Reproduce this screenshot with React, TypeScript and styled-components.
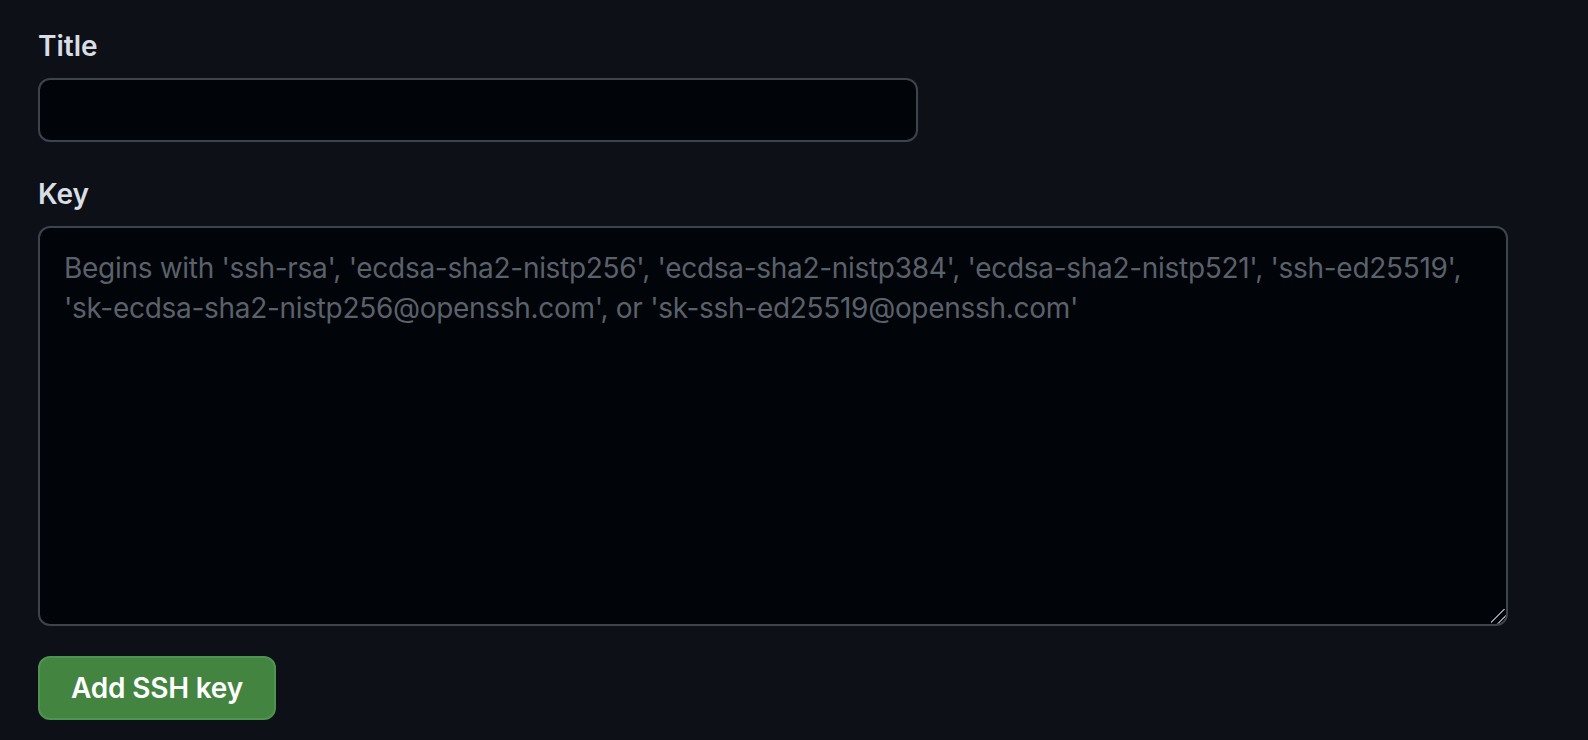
import React from "react";
import styled, { createGlobalStyle } from "styled-components";

const Global = createGlobalStyle`
  html, body {
    margin: 0;
    padding: 0;
    background: #0d1117;
  }
  body {
    font-family: Inter, "Noto Sans", "Liberation Sans", sans-serif;
    color: #e6edf3;
  }
`;

const Page = styled.div`
  min-height: 740px;
  box-sizing: border-box;
  padding: 26px 0 0 38px;
  background: #0d1117;
`;

const Form = styled.form`
  display: flex;
  flex-direction: column;
  align-items: flex-start;
`;

const Group = styled.div<{ $gap?: number }>`
  display: flex;
  flex-direction: column;
  align-items: flex-start;
  margin-bottom: ${(p) => p.$gap ?? 32}px;
`;

const Label = styled.label`
  display: block;
  font-size: 28px;
  line-height: 40px;
  font-weight: 600;
  color: #d9dee4;
  margin-bottom: 12px;
`;

const fieldBase = `
  box-sizing: border-box;
  background: #010409;
  border: 2px solid #3d444d;
  border-radius: 12px;
  color: #e6edf3;
  font-family: Inter, "Noto Sans", "Liberation Sans", sans-serif;
  font-size: 28px;
  line-height: 40px;
  outline: none;
  color-scheme: dark;
`;

const TextInput = styled.input`
  ${fieldBase}
  width: 880px;
  height: 64px;
  padding: 0 24px;
`;

const TextArea = styled.textarea`
  ${fieldBase}
  display: block;
  width: 1470px;
  height: 400px;
  padding: 20px 24px 16px;
  letter-spacing: -0.3px;
  resize: vertical;
  &::placeholder {
    color: #5a616a;
    opacity: 1;
  }
  &::-webkit-scrollbar {
    width: 16px;
    height: 16px;
    background: transparent;
  }
  &::-webkit-resizer {
    background: linear-gradient(
      135deg,
      transparent 0%,
      transparent 42%,
      #9198a1 42%,
      #9198a1 50%,
      transparent 50%,
      transparent 68%,
      #9198a1 68%,
      #9198a1 76%,
      transparent 76%
    );
    border-bottom-right-radius: 10px;
  }
`;

const SubmitButton = styled.button`
  box-sizing: border-box;
  height: 64px;
  padding: 0 31px;
  background: #428440;
  border: 2px solid #4e9350;
  border-radius: 12px;
  color: #ffffff;
  font-family: Inter, "Noto Sans", "Liberation Sans", sans-serif;
  font-size: 28px;
  font-weight: 600;
  letter-spacing: -0.2px;
  line-height: 40px;
  cursor: pointer;
`;

export default function App() {
  return (
    <>
      <Global />
      <Page>
        <Form onSubmit={(e) => e.preventDefault()}>
          <Group>
            <Label htmlFor="ssh-title">Title</Label>
            <TextInput id="ssh-title" type="text" />
          </Group>
          <Group $gap={30}>
            <Label htmlFor="ssh-key">Key</Label>
            <TextArea
              id="ssh-key"
              placeholder="Begins with 'ssh-rsa', 'ecdsa-sha2-nistp256', 'ecdsa-sha2-nistp384', 'ecdsa-sha2-nistp521', 'ssh-ed25519', 'sk-ecdsa-sha2-nistp256@openssh.com', or 'sk-ssh-ed25519@openssh.com'"
            />
          </Group>
          <SubmitButton type="submit">Add SSH key</SubmitButton>
        </Form>
      </Page>
    </>
  );
}
